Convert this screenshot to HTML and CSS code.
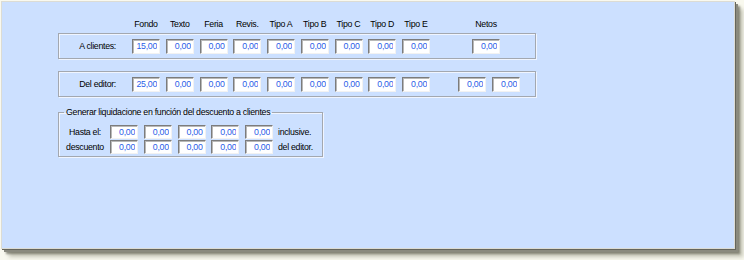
FILE: index.html
```html
<!DOCTYPE html>
<html lang="es">
<head>
  <meta charset="UTF-8">
  <title>Liquidaciones</title>
  <link rel="stylesheet" href="styles.css">
</head>
<body>

  <div class="panel">

    <!-- column headings -->
    <div class="heads">
      <span class="hd">Fondo</span>
      <span class="hd">Texto</span>
      <span class="hd">Feria</span>
      <span class="hd">Revis.</span>
      <span class="hd">Tipo A</span>
      <span class="hd">Tipo B</span>
      <span class="hd">Tipo C</span>
      <span class="hd">Tipo D</span>
      <span class="hd">Tipo E</span>
      <span class="hd netos">Netos</span>
    </div>

    <div class="group">
      <span class="lbl">A clientes:</span>
      <div class="fields">
        <input class="fld" value="15,00" readonly>
        <input class="fld" value="0,00" readonly>
        <input class="fld" value="0,00" readonly>
        <input class="fld" value="0,00" readonly>
        <input class="fld" value="0,00" readonly>
        <input class="fld" value="0,00" readonly>
        <input class="fld" value="0,00" readonly>
        <input class="fld" value="0,00" readonly>
        <input class="fld" value="0,00" readonly>
      </div>
      <input class="fld netos-fld" value="0,00" readonly>
    </div>

    <div class="group group-editor">
      <span class="lbl">Del editor:</span>
      <div class="fields">
        <input class="fld" value="25,00" readonly>
        <input class="fld" value="0,00" readonly>
        <input class="fld" value="0,00" readonly>
        <input class="fld" value="0,00" readonly>
        <input class="fld" value="0,00" readonly>
        <input class="fld" value="0,00" readonly>
        <input class="fld" value="0,00" readonly>
        <input class="fld" value="0,00" readonly>
        <input class="fld" value="0,00" readonly>
      </div>
      <div class="fields extra">
        <input class="fld" value="0,00" readonly>
        <input class="fld" value="0,00" readonly>
      </div>
    </div>

    <fieldset class="scale">
      <legend>Generar liquidacione en función del descuento a clientes</legend>
      <div class="scale-row">
        <span class="scale-lbl">Hasta el:</span>
        <div class="fields">
          <input class="fld" value="0,00" readonly>
          <input class="fld" value="0,00" readonly>
          <input class="fld" value="0,00" readonly>
          <input class="fld" value="0,00" readonly>
          <input class="fld" value="0,00" readonly>
        </div>
        <span class="after">inclusive.</span>
      </div>
      <div class="scale-row">
        <span class="scale-lbl">descuento</span>
        <div class="fields">
          <input class="fld" value="0,00" readonly>
          <input class="fld" value="0,00" readonly>
          <input class="fld" value="0,00" readonly>
          <input class="fld" value="0,00" readonly>
          <input class="fld" value="0,00" readonly>
        </div>
        <span class="after">del editor.</span>
      </div>
    </fieldset>

  </div>

</body>
</html>
```

FILE: styles.css
```css
html {
  background: #f9f9ef;
}

body {
  box-sizing: border-box;
  min-height: 260px;
  margin: 0;
  padding: 1px 0 0 1px;
  overflow: hidden;
  font-family: "Liberation Sans", Arial, sans-serif;
  font-size: 8.8px;
  letter-spacing: -0.3px;
  color: #000;
}

.panel {
  box-sizing: border-box;
  width: 734px;
  height: 248px;
  padding: 16px 0 0 56px;
  background: #cce0ff;
  border: 1px solid #dcdcd4;
  box-shadow: 1px 1px 0 #66665c, 3px 3px 0 #8a8a7e, 5px 5px 2px rgba(110, 110, 95, 0.75), 8px 8px 4px rgba(140, 140, 120, 0.45);
}

/* headings line up with the input columns */
.heads {
  display: flex;
  gap: 5.75px;
  margin-left: 74px;
  line-height: 12px;
}

.hd {
  width: 28px;
  text-align: center;
  white-space: nowrap;
}

.hd.netos {
  margin-left: 36.25px;
}

.group {
  box-sizing: border-box;
  display: flex;
  align-items: center;
  width: 478px;
  height: 26px;
  margin-top: 3px;
  border: 1px solid #a3a8b0;
  box-shadow: inset 1px 1px 0 #f0f5ff, 1px 1px 0 #f0f5ff;
}

.group-editor {
  margin-top: 12px;
}

.lbl {
  width: 73px;
  padding-right: 16px;
  box-sizing: border-box;
  text-align: right;
}

.fields {
  display: flex;
  gap: 5.75px;
}

.fld {
  box-sizing: border-box;
  width: 28px;
  height: 15px;
  margin: 0;
  padding: 0 2px 0 0;
  font: inherit;
  letter-spacing: inherit;
  color: #2a5ee8;
  text-align: right;
  background: #fff;
  border: 1px solid;
  border-color: #7c7c7c #f2f2f2 #f2f2f2 #7c7c7c;
  box-shadow: inset 1px 1px 0 #b8b8b8;
  outline: none;
}

.netos-fld {
  margin-left: 42px;
}

.extra {
  gap: 6px;
  margin-left: 28px;
}

.scale {
  box-sizing: border-box;
  width: 265px;
  margin: 10px 0 0;
  padding: 8px 0 2px 5px;
  border: 1px solid #a3a8b0;
  box-shadow: inset 1px 1px 0 #f0f5ff, 1px 1px 0 #f0f5ff;
}

.scale legend {
  padding: 0 2px;
  line-height: 10px;
}

.scale-row {
  display: flex;
  align-items: center;
}

.scale-row + .scale-row {
  margin-top: 1px;
}

.scale-row .fld {
  height: 14px;
}

.scale-lbl {
  width: 42px;
  margin-right: 4px;
  text-align: center;
  white-space: nowrap;
}

.after {
  margin-left: 5px;
}
```
